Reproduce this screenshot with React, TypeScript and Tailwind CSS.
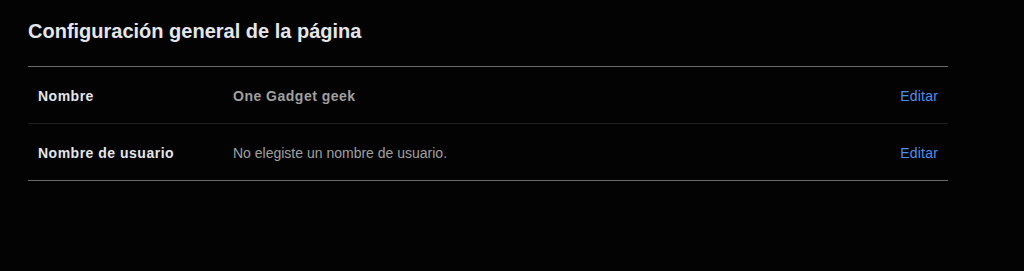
import React from "react";

export default function App() {
  const rows = [
    { label: "Nombre", value: "One Gadget geek", bold: true },
    { label: "Nombre de usuario", value: "No elegiste un nombre de usuario.", bold: false },
  ];
  return (
    <div
      className="w-[1024px] h-[271px] bg-[#030303] pl-[28px] pt-[19px]"
      style={{ fontFamily: '"Liberation Sans", Arial, sans-serif' }}
    >
      <h1 className="text-[20px] leading-[24px] font-bold text-[#e4e6eb] mb-[23px]">
        Configuración general de la página
      </h1>
      <div className="w-[920px] border-t border-b border-[#6a6a6a]">
        {rows.map((r, i) => (
          <div
            key={r.label}
            className={
              "flex items-center px-[10px] pt-[2px] " +
              (i === 0 ? "h-[57px] border-b border-[#1e1e1e]" : "h-[56px]")
            }
          >
            <div className="w-[195px] text-[14px] font-bold tracking-[0.5px] text-[#e4e6eb]">{r.label}</div>
            <div
              className={
                "flex-1 text-[14px] text-[#a0a0a0] " +
                (r.bold ? "font-bold tracking-[0.5px]" : "font-normal")
              }
            >
              {r.value}
            </div>
            <a className="text-[14px] tracking-[0.2px] text-[#4a90ec] cursor-pointer">Editar</a>
          </div>
        ))}
      </div>
    </div>
  );
}
